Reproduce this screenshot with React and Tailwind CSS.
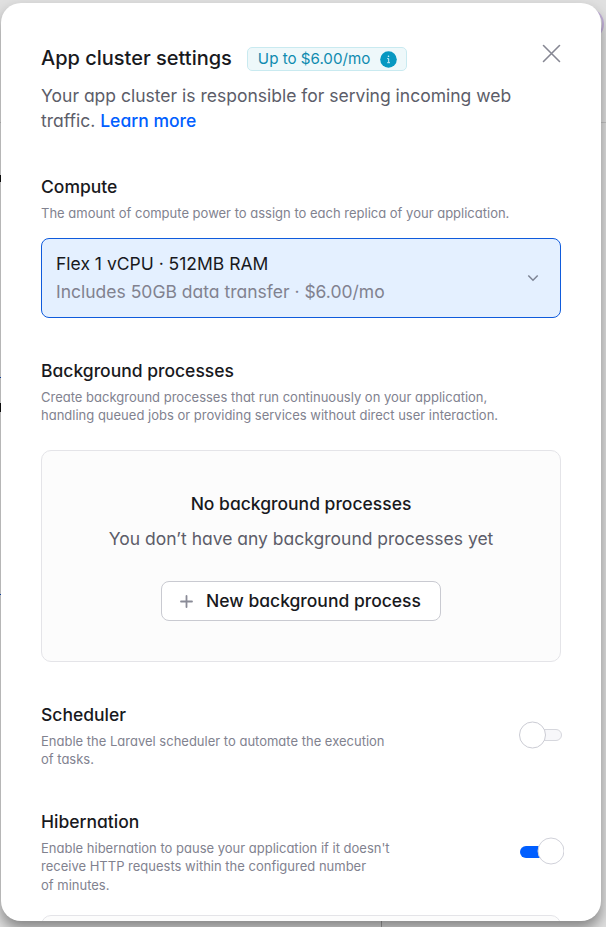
import React from "react";

function SectionHeading({ title, lines }) {
  return (
    <div>
      <h2 className="text-[17.5px] leading-6 font-medium text-[#18191d]">{title}</h2>
      <p className="mt-[5px] text-[13px] leading-[18.4px] text-[#81828f]">
        {lines.map((line) => (
          <span key={line} className="block whitespace-nowrap">{line}</span>
        ))}
      </p>
    </div>
  );
}

function Toggle({ on }) {
  return (
    <svg width="48" height="32" viewBox="0 0 48 32" role="switch" aria-checked={on} className="block">
      {on ? (
        <>
          <rect x="4" y="11" width="40" height="12" rx="6" fill="#005eff" />
          <circle cx="35" cy="16" r="13" fill="#fff" stroke="#d0d1d9" />
        </>
      ) : (
        <>
          <rect x="8.5" y="10.5" width="37" height="11" rx="5.5" fill="#f7f7fa" stroke="#d6d7dd" />
          <circle cx="16.5" cy="16" r="13" fill="#fff" stroke="#cbccd4" />
        </>
      )}
    </svg>
  );
}

export default function App() {
  return (
    <div className="relative h-[927px] w-[606px] overflow-hidden bg-[#e0e0e0] pt-[3px] pl-px font-['Inter',sans-serif] [font-feature-settings:'cv11']">
      <div className="absolute top-[8px] right-[2px] h-[32px] w-[32px] rounded-full border-2 border-[#c5b3dc]" />
      <div className="absolute top-[122px] left-0 h-px w-[606px] bg-[#c4c4c4]" />
      <div className="absolute top-[175px] left-0 h-[7px] w-px bg-[#101010]" />
      <div className="absolute top-[377px] left-0 h-px w-px bg-[#0f4fbe]" />
      <div className="absolute top-[403px] left-0 h-[9px] w-px bg-[#101010]" />
      <div className="absolute top-[594px] left-0 h-px w-px bg-[#0f4fbe]" />
      <div className="absolute top-[900px] left-[381px] h-[27px] w-px bg-[#a0a0a0]" />

      <main className="relative h-[918px] w-[600px] overflow-hidden rounded-[20px] bg-white px-10 pt-[43px] shadow-[0_8px_14px_rgba(0,0,0,0.4)]">
        <header className="flex h-6 items-center">
          <h1 className="text-[20px] leading-6 font-medium whitespace-nowrap text-[#18191d]">App cluster settings</h1>
          <span className="mt-[2px] ml-[15px] flex h-6 w-[160px] shrink-0 items-center justify-between rounded-[5px] border border-[#c9eaf0] bg-[#eef8fa] pr-[9px] pl-2.5 text-[15.15px] whitespace-nowrap text-[#0e8bb0]">
            Up to $6.00/mo
            <svg width="17" height="17" viewBox="0 0 17 17">
              <circle cx="8.5" cy="8.5" r="8.3" fill="#0798c1" />
              <path d="M7.2 7.6h1.5v3.8M7.2 11.7h2.8" stroke="#d6f0f7" strokeWidth="1" fill="none" />
              <circle cx="8.5" cy="5.3" r="0.8" fill="#e6f7fb" />
            </svg>
          </span>
          <button type="button" aria-label="Close" className="-mt-[9px] ml-auto">
            <svg width="19" height="19" viewBox="0 0 19 19" fill="none" stroke="#868793" strokeWidth="1.6" strokeLinecap="round">
              <path d="M1.5 1.5l16 16M17.5 1.5l-16 16" />
            </svg>
          </button>
        </header>
        <p className="mt-[13px] text-[17.5px] leading-[25px] text-[#5c5d69]">
          <span className="block whitespace-nowrap">Your app cluster is responsible for serving incoming web</span>
          <span className="block whitespace-nowrap">
            traffic. <a className="font-medium text-[#005eff]">Learn more</a>
          </span>
        </p>

        <section className="mt-[42px]">
          <SectionHeading title="Compute" lines={["The amount of compute power to assign to each replica of your application."]} />
          <div className="mt-[15.6px] flex h-20 items-center justify-between rounded-[8px] border border-[#0f5bdc] bg-[#e4f0ff] pr-[21px] pl-[14px]">
            <div className="text-[17.5px] leading-7 whitespace-nowrap">
              <p className="text-[#18191d]">Flex 1 vCPU · 512MB RAM</p>
              <p className="text-[#81828f]">Includes 50GB data transfer · $6.00/mo</p>
            </div>
            <svg width="12" height="8" viewBox="0 0 12 8" fill="none" stroke="#7d8494" strokeWidth="1.5">
              <path d="M1.3 1.5L6 6.2l4.7-4.7" />
            </svg>
          </div>
        </section>

        <section className="mt-[41px]">
          <SectionHeading
            title="Background processes"
            lines={[
              "Create background processes that run continuously on your application,",
              "handling queued jobs or providing services without direct user interaction.",
            ]}
          />
          <div className="mt-[25.2px] flex h-[212px] flex-col items-center rounded-[10px] border border-[#e4e4e8] bg-[#fcfcfc] pt-10 whitespace-nowrap">
            <h3 className="text-[17.5px] leading-[26px] font-medium text-[#18191d]">No background processes</h3>
            <p className="mt-[9px] text-[17.5px] leading-[26px] text-[#5c5d69]">You don’t have any background processes yet</p>
            <button type="button" className="mt-[29px] flex h-10 w-[280px] items-center rounded-[8px] border border-[#c9cad1] bg-white pl-[18px]">
              <svg width="13" height="13" viewBox="0 0 13 13" fill="none" stroke="#8a8b97" strokeWidth="1.8" strokeLinecap="round">
                <path d="M6.5 1v11M1 6.5h11" />
              </svg>
              <span className="ml-[13px] text-[17.5px] font-medium text-[#18191d]">New background process</span>
            </button>
          </div>
        </section>

        <section className="mt-[41px] flex h-[66px] justify-between">
          <SectionHeading title="Scheduler" lines={["Enable the Laravel scheduler to automate the execution", "of tasks."]} />
          <div className="-mr-[3px] pt-4">
            <Toggle on={false} />
          </div>
        </section>

        <section className="mt-[41px] flex h-[84px] justify-between">
          <SectionHeading
            title="Hibernation"
            lines={[
              "Enable hibernation to pause your application if it doesn't",
              "receive HTTP requests within the configured number",
              "of minutes.",
            ]}
          />
          <div className="-mr-[3px] pt-[25px]">
            <Toggle on />
          </div>
        </section>
        <div className="mt-[21px] h-20 rounded-[10px] border border-[#e4e4e8] bg-[#fcfcfc]" />
      </main>
    </div>
  );
}
